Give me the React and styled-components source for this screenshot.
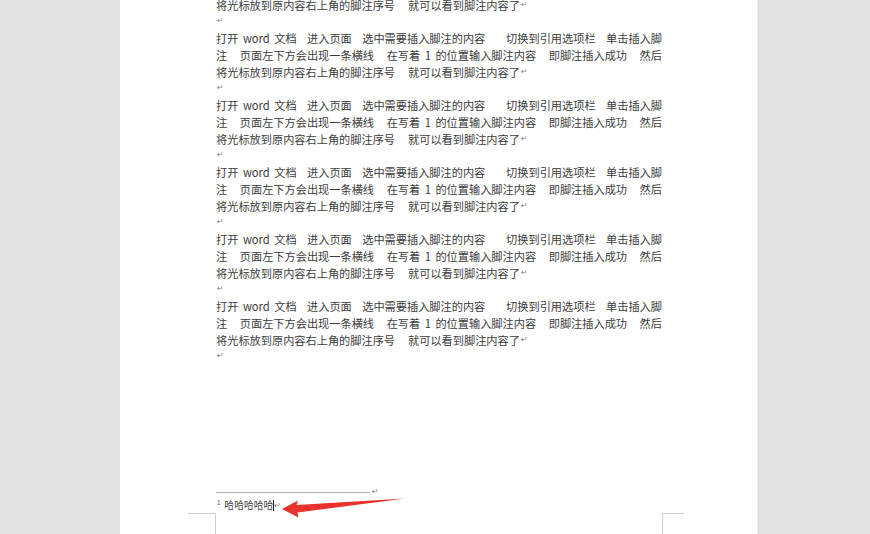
import styled, { createGlobalStyle } from "styled-components";

const Global = createGlobalStyle`
  html, body {
    margin: 0;
    padding: 0;
    background: #e5e5e5;
    overflow: hidden;
  }
  body {
    font-family: "Noto Sans CJK SC", "Noto Sans", sans-serif;
  }
`;

const Canvas = styled.div`
  height: 534px;
  overflow: hidden;
  padding-left: 120px;
`;

const Page = styled.div`
  position: relative;
  width: 637px;
  height: 534px;
  background: #fff;
  box-shadow: 1px 0 0 #f2f2f2, 2px 0 1px #dcdcdc;
  display: flex;
  flex-direction: column;
`;

const TextBlock = styled.div`
  margin-top: -3.4px;
  padding-left: 96px;
  width: 446px;
  color: #3c3c3c;
  font-size: 11.2px;
`;

const Line = styled.div`
  height: 16.75px;
  line-height: 16.75px;
  display: flex;
  justify-content: ${(p) => (p.$justify ? "space-between" : "flex-start")};
  white-space: nowrap;
`;

const Seg = styled.span`
  word-spacing: 2px;
  margin-left: ${(p) => p.$gap || 0}px;
`;

const Mark = styled.span`
  font-family: "DejaVu Sans", sans-serif;
  font-size: 8px;
  color: #808080;
  margin-left: 1px;
`;

const FootArea = styled.div`
  margin-top: 122px;
  padding-left: 96px;
`;

const SepRow = styled.div`
  height: 10px;
  display: flex;
  align-items: center;
`;

const SepLine = styled.div`
  width: 154px;
  border-top: 1px solid #b4b4b4;
`;

const SepMark = styled(Mark)`
  margin-left: 2px;
  margin-top: -2px;
`;

const NoteRow = styled.div`
  height: 16px;
  display: flex;
  align-items: flex-start;
  padding-top: 2px;
  box-sizing: border-box;
  color: #444;
`;

const NoteNum = styled.span`
  font-size: 6px;
  line-height: 6px;
  margin-left: 1px;
  margin-top: 1px;
  color: #555;
`;

const NoteText = styled.span`
  font-size: 9.8px;
  line-height: 13px;
  margin-left: 4px;
`;

const Caret = styled.span`
  display: inline-block;
  width: 1px;
  height: 11px;
  margin-top: 1px;
  background: #222;
`;

const NoteMark = styled(Mark)`
  line-height: 13px;
  margin-left: 0;
`;

const CropRow = styled.div`
  flex: 1;
  display: flex;
  padding-left: 68px;
`;

const CropLeft = styled.div`
  width: 27px;
  border-top: 1px solid #cfcfcf;
  border-right: 1px solid #cfcfcf;
`;

const CropGap = styled.div`
  width: 446px;
`;

const CropRight = styled.div`
  width: 21px;
  border-top: 1px solid #cfcfcf;
  border-left: 1px solid #cfcfcf;
`;

const Arrow = styled.svg`
  position: absolute;
  left: 160px;
  top: 494px;
  overflow: visible;
`;

const LastLine = () => (
  <Line>
    <Seg>将光标放到原内容右上角的脚注序号</Seg>
    <Seg $gap={13}>就可以看到脚注内容了</Seg>
    <Mark>↵</Mark>
  </Line>
);

const Paragraph = () => (
  <>
    <Line $justify>
      <Seg>打开 word 文档</Seg>
      <Seg>进入页面</Seg>
      <Seg>选中需要插入脚注的内容</Seg>
      <span />
      <Seg>切换到引用选项栏</Seg>
      <Seg>单击插入脚</Seg>
    </Line>
    <Line $justify>
      <Seg>注</Seg>
      <Seg>页面左下方会出现一条横线</Seg>
      <Seg>在写着 1 的位置输入脚注内容</Seg>
      <Seg>即脚注插入成功</Seg>
      <Seg>然后</Seg>
    </Line>
    <LastLine />
    <Line>
      <Mark>↵</Mark>
    </Line>
  </>
);

export default function App() {
  return (
    <>
      <Global />
      <Canvas>
        <Page>
          <TextBlock>
            <LastLine />
            <Line>
              <Mark>↵</Mark>
            </Line>
            {[0, 1, 2, 3, 4].map((i) => (
              <Paragraph key={i} />
            ))}
          </TextBlock>
          <FootArea>
            <SepRow>
              <SepLine />
              <SepMark>↵</SepMark>
            </SepRow>
            <NoteRow>
              <NoteNum>1</NoteNum>
              <NoteText>哈哈哈哈哈</NoteText>
              <Caret />
              <NoteMark>↵</NoteMark>
            </NoteRow>
          </FootArea>
          <CropRow>
            <CropLeft />
            <CropGap />
            <CropRight />
          </CropRow>
          <Arrow width="130" height="26" viewBox="280 494 130 26">
            <polygon
              points="282,509 298,500.5 296.5,505 405,498.5 297.5,512.5 298.5,517.5"
              fill="#e8322b"
            />
          </Arrow>
        </Page>
      </Canvas>
    </>
  );
}
